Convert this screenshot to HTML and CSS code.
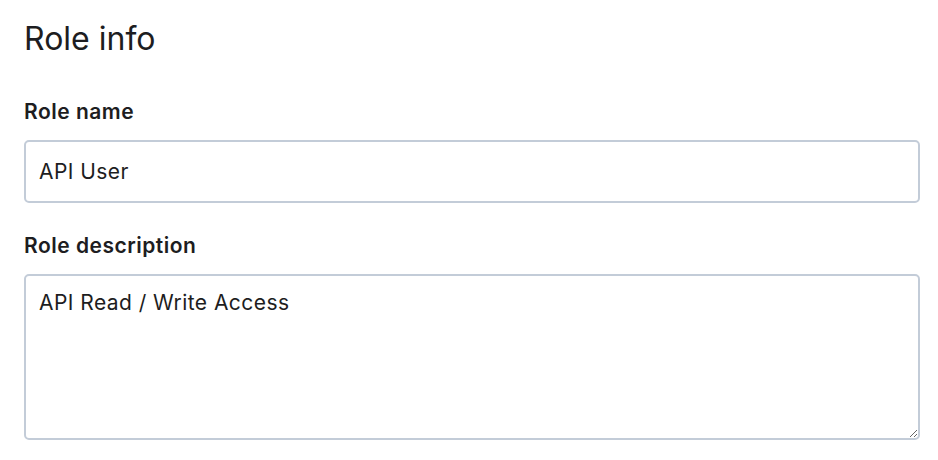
FILE: index.html
```html
<!DOCTYPE html>
<html>
<head>
<meta charset="utf-8">
<link rel="stylesheet" href="styles.css">
</head>
<body>
<section class="form">
  <h1 class="title">Role info</h1>
  <div class="field">
    <label class="label" for="rn">Role name</label>
    <input class="input" id="rn" type="text" value="API User">
  </div>
  <div class="field">
    <label class="label" for="rd">Role description</label>
    <textarea class="textarea" id="rd">API Read / Write Access</textarea>
  </div>
</section>
</body>
</html>
```
FILE: styles.css
```css
html, body {
  margin: 0;
  background: #ffffff;
}
body {
  font-family: Inter, "Open Sans", sans-serif;
  color: #1d1d21;
}
.form {
  width: 896px;
  padding: 19px 0 0 24px;
  display: flex;
  flex-direction: column;
}
.title {
  margin: 0;
  font-size: 32px;
  font-weight: 400;
  line-height: 40px;
}
.field {
  display: flex;
  flex-direction: column;
}
.field:first-of-type {
  margin-top: 41px;
}
.label {
  font-size: 21px;
  font-weight: 600;
  line-height: 24px;
  letter-spacing: 0.5px;
  margin-bottom: 16px;
}
.input, .textarea {
  box-sizing: border-box;
  width: 100%;
  border: 2px solid #c3ccd8;
  border-radius: 5px;
  font-family: inherit;
  font-size: 21px;
  letter-spacing: 0.45px;
  color: #1d1d21;
  padding: 0 13px;
  margin: 0;
  outline: none;
  background: #fff;
}
.input {
  height: 63px;
  margin-bottom: 31px;
}
.textarea {
  height: 166px;
  padding-top: 14px;
  resize: vertical;
}
```
